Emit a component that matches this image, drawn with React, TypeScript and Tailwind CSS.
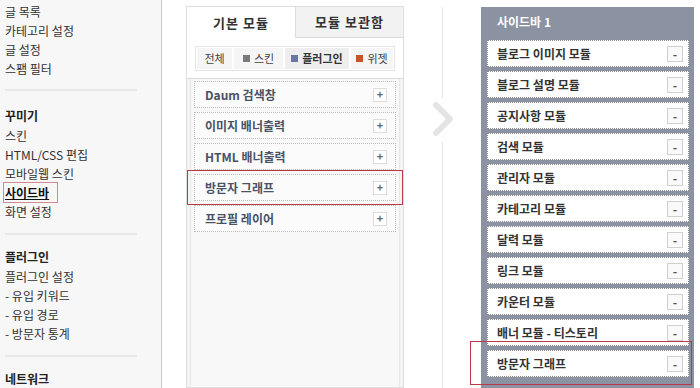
const FONT = "font-['Noto_Sans_CJK_KR','Noto_Sans',sans-serif]";

const postMenu = ['글 목록', '카테고리 설정', '글 설정', '스팸 필터'];
const pluginMenu = ['플러그인 설정', '- 유입 키워드', '- 유입 경로', '- 방문자 통계'];

const modules = ['Daum 검색창', '이미지 배너출력', 'HTML 배너출력', '방문자 그래프', '프로필 레이어'];

const sidebarItems = [
  '블로그 이미지 모듈',
  '블로그 설명 모듈',
  '공지사항 모듈',
  '검색 모듈',
  '관리자 모듈',
  '카테고리 모듈',
  '달력 모듈',
  '링크 모듈',
  '카운터 모듈',
  '배너 모듈 - 티스토리',
  '방문자 그래프',
];

function NavLine({ children }: { children: React.ReactNode }) {
  return <div className="h-[19px] leading-[19px] text-[12px] text-[#333]">{children}</div>;
}

function Divider() {
  return <div className="h-[2px] w-[132px] bg-[#e8e8e8]" />;
}

function LeftNav() {
  return (
    <div className="w-[162px] shrink-0 bg-[#f7f7f7] border-r border-[#c9c9c9] pl-[5px] pt-[2px]">
      {postMenu.map((m) => (
        <NavLine key={m}>{m}</NavLine>
      ))}
      <div className="mt-[11px] mb-[15px]">
        <Divider />
      </div>
      <div className="h-[19px] leading-[19px] text-[12px] font-bold text-[#222]">꾸미기</div>
      <div className="mt-[1px]">
        <NavLine>스킨</NavLine>
        <NavLine>HTML/CSS 편집</NavLine>
        <NavLine>모바일웹 스킨</NavLine>
        <div className="-ml-[2px] -my-[1px] w-[55px] h-[21px] border border-[#d28a92] pl-[1px] leading-[19px] text-[12px] font-bold underline text-[#111]">
          사이드바
        </div>
        <NavLine>화면 설정</NavLine>
      </div>
      <div className="mt-[12px] mb-[12px]">
        <Divider />
      </div>
      <div className="h-[19px] leading-[19px] text-[12px] font-bold text-[#222]">플러그인</div>
      <div className="mt-[1px]">
        {pluginMenu.map((m) => (
          <NavLine key={m}>{m}</NavLine>
        ))}
      </div>
      <div className="mt-[12px] mb-[12px]">
        <Divider />
      </div>
      <div className="h-[19px] leading-[19px] text-[12px] font-bold text-[#222]">네트워크</div>
    </div>
  );
}

function FilterBar() {
  return (
    <div className="flex h-[25px] border border-[#e4e4e4] bg-white p-[1px] gap-[2px] text-[11px] text-[#444]">
      <div className="w-[35px] flex items-center justify-center bg-[#f5f5f5]">전체</div>
      <div className="w-[49px] flex items-center justify-center gap-[4px] bg-[#f5f5f5]">
        <span className="w-[7px] h-[7px] bg-[#7a7a7a]" />
        스킨
      </div>
      <div className="w-[64px] flex items-center justify-center gap-[4px] bg-[#eeeeee] font-bold text-[#333]">
        <span className="w-[7px] h-[7px] bg-[#6b76a6]" />
        플러그인
      </div>
      <div className="flex-1 flex items-center justify-center gap-[4px] bg-[#f5f5f5]">
        <span className="w-[7px] h-[7px] bg-[#c7532b]" />
        위젯
      </div>
    </div>
  );
}

function ModuleItem({ label }: { label: string }) {
  return (
    <div className="h-[27px] flex items-center justify-between pl-[10px] pr-[8px] bg-[#fbfbfb] border border-dotted border-[#bdbdbd]">
      <span className="text-[12px] font-bold text-[#4a5266]">{label}</span>
      <span className="w-[14px] h-[14px] flex items-center justify-center border border-[#dddddd] bg-white text-[11px] leading-none font-bold text-[#666]">
        +
      </span>
    </div>
  );
}

function ModulePanel() {
  return (
    <div className="ml-[24px] mt-[6px] w-[218px] shrink-0 flex flex-col border border-[#dedede] bg-[#f4f4f4]">
      <div className="flex h-[31px] text-[13px] font-bold text-[#333] tracking-[1px]">
        <div className="w-[108px] flex items-center justify-center bg-white">기본 모듈</div>
        <div className="flex-1 flex items-center justify-center bg-[#f2f2f2] border-l border-b border-[#dcdcdc]">
          모듈 보관함
        </div>
      </div>
      <div className="bg-white px-[8px] pt-[8px] pb-[7px] border-b border-[#dcdcdc]">
        <FilterBar />
      </div>
      <div className="flex-1 mx-[3px] border-x border-[#e8e8e8] bg-[#f8f8f8] px-[3px] pt-[2px] flex flex-col gap-[4px]">
        {modules.map((m) =>
          m === '방문자 그래프' ? (
            <div key={m} className="-mx-[7px] -my-[4px] py-[3px] px-[6px] border border-[#b83a48]">
              <ModuleItem label={m} />
            </div>
          ) : (
            <ModuleItem key={m} label={m} />
          )
        )}
      </div>
    </div>
  );
}

function Arrow() {
  return (
    <div className="w-[77px] shrink-0 flex flex-col items-center pt-[7px]">
      <div className="w-px h-[91px] bg-[#e6e6e6]" />
      <svg width="24" height="36" viewBox="0 0 24 36" className="mt-[3px] ml-[2px]">
        <polyline points="4,4 18,18 4,32" fill="none" stroke="#e4e4e4" strokeWidth="6" strokeLinecap="round" strokeLinejoin="round" />
      </svg>
      <div className="w-px flex-1 mt-[5px] bg-[#e6e6e6]" />
    </div>
  );
}

function SidebarItem({ label }: { label: string }) {
  return (
    <div className="h-[27px] flex items-center justify-between pl-[9px] pr-[5px] bg-white border border-dotted border-[#8a8a8a]">
      <span className="text-[12px] font-semibold text-[#333]">{label}</span>
      <span className="w-[16px] h-[16px] flex items-center justify-center border border-[#d0d0d0] bg-[#fafafa] text-[12px] leading-none font-bold text-[#555]">
        -
      </span>
    </div>
  );
}

function SidebarPanel() {
  return (
    <div className="mt-[7px] w-[213px] shrink-0 bg-[#8b93a3] flex flex-col">
      <div className="h-[29px] flex items-center pl-[16px] text-[12px] font-bold text-white">사이드바 1</div>
      <div className="flex flex-col gap-[4px] pt-[4px] pl-[6px] pr-[5px]">
        {sidebarItems.map((s, i) =>
          i === sidebarItems.length - 1 ? (
            <div key={s} className="relative">
              <SidebarItem label={s} />
              <div className="absolute -left-[17px] -right-[3px] -top-[9px] -bottom-[8px] border border-[#b83a48]" />
            </div>
          ) : (
            <SidebarItem key={s} label={s} />
          )
        )}
      </div>
    </div>
  );
}

export default function App() {
  return (
    <div className={`w-[700px] h-[388px] overflow-hidden flex bg-white ${FONT}`}>
      <LeftNav />
      <ModulePanel />
      <Arrow />
      <SidebarPanel />
    </div>
  );
}
